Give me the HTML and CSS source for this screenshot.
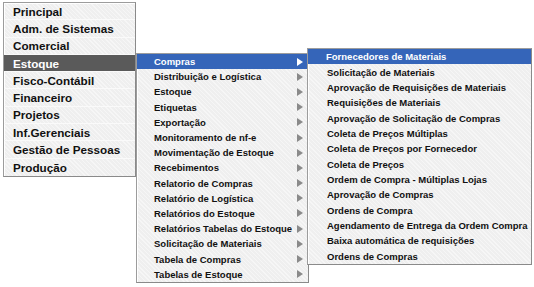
FILE: index.html
```html
<!DOCTYPE html>
<html>
<head>
<meta charset="utf-8">
<link rel="stylesheet" href="styles.css">
</head>
<body>
<div class="stage">
  <ul class="menu main">
    <li>Principal</li>
    <li>Adm. de Sistemas</li>
    <li>Comercial</li>
    <li class="active">Estoque</li>
    <li>Fisco-Contábil</li>
    <li>Financeiro</li>
    <li>Projetos</li>
    <li>Inf.Gerenciais</li>
    <li>Gestão de Pessoas</li>
    <li>Produção</li>
  </ul>
  <ul class="menu sub">
    <li class="sel arrow">Compras</li>
    <li class="arrow">Distribuição e Logística</li>
    <li class="arrow">Estoque</li>
    <li class="arrow">Etiquetas</li>
    <li class="arrow">Exportação</li>
    <li class="arrow">Monitoramento de nf-e</li>
    <li class="arrow">Movimentação de Estoque</li>
    <li class="arrow">Recebimentos</li>
    <li class="arrow">Relatorio de Compras</li>
    <li class="arrow">Relatório de Logística</li>
    <li class="arrow">Relatórios do Estoque</li>
    <li class="arrow">Relatórios Tabelas do Estoque</li>
    <li class="arrow">Solicitação de Materiais</li>
    <li class="arrow">Tabela de Compras</li>
    <li class="arrow">Tabelas de Estoque</li>
  </ul>
  <ul class="menu leaf">
    <li class="sel">Fornecedores de Materiais</li>
    <li>Solicitação de Materiais</li>
    <li>Aprovação de Requisições de Materiais</li>
    <li>Requisições de Materiais</li>
    <li>Aprovação de Solicitação de Compras</li>
    <li>Coleta de Preços Múltiplas</li>
    <li>Coleta de Preços por Fornecedor</li>
    <li>Coleta de Preços</li>
    <li>Ordem de Compra - Múltiplas Lojas</li>
    <li>Aprovação de Compras</li>
    <li>Ordens de Compra</li>
    <li>Agendamento de Entrega da Ordem Compra</li>
    <li>Baixa automática de requisições</li>
    <li>Ordens de Compras</li>
  </ul>
</div>
</body>
</html>
```
FILE: styles.css
```css
html, body {
  margin: 0;
  padding: 0;
  background: #ffffff;
}
.stage {
  position: relative;
  width: 534px;
  height: 287px;
  font-family: "Liberation Sans", Arial, sans-serif;
  font-weight: bold;
  color: #111111;
}
.menu {
  list-style: none;
  margin: 0;
  padding: 0;
  background-color: #efefef;
  background-image: repeating-linear-gradient(45deg, rgba(255,255,255,0.45) 0 1px, rgba(255,255,255,0) 1px 3px);
  border: 1px solid #9c9c9c;
  border-right-color: #8a8a8a;
  border-bottom-color: #8a8a8a;
  box-shadow: inset 1px 1px 0 #ffffff;
}
.menu li {
  display: flex;
  align-items: center;
  white-space: nowrap;
}
.main {
  margin: 2px 0 0 3px;
  width: 131px;
  padding: 0;
}
.main li {
  height: 16.3px;
  border-bottom: 1px solid #fafafa;
  padding-left: 9px;
  font-size: 11.7px;
}
.main li:last-child {
  border-bottom: none;
  height: 17.3px;
}
.main li.active {
  background: #5a5a5a;
  color: #ffffff;
}
.sub {
  position: absolute;
  left: 136px;
  top: 51px;
  width: 171px;
}
.sub li {
  height: 15.2px;
  padding-left: 17px;
  font-size: 9.5px;
  position: relative;
}
.sub li.arrow::after {
  content: "";
  position: absolute;
  left: 160px;
  top: 50%;
  margin-top: -4px;
  border-left: 6px solid #8a8a8a;
  border-top: 4px solid transparent;
  border-bottom: 4px solid transparent;
}
.sub li.sel.arrow::after {
  border-left-color: #ffffff;
}
.sel {
  background: #3565b9;
  color: #ffffff;
}
.leaf {
  position: absolute;
  left: 307px;
  top: 46px;
  width: 223px;
}
.leaf li {
  height: 15.35px;
  padding-left: 19px;
  font-size: 9.5px;
}
.leaf li.sel {
  padding-left: 18px;
}
```
